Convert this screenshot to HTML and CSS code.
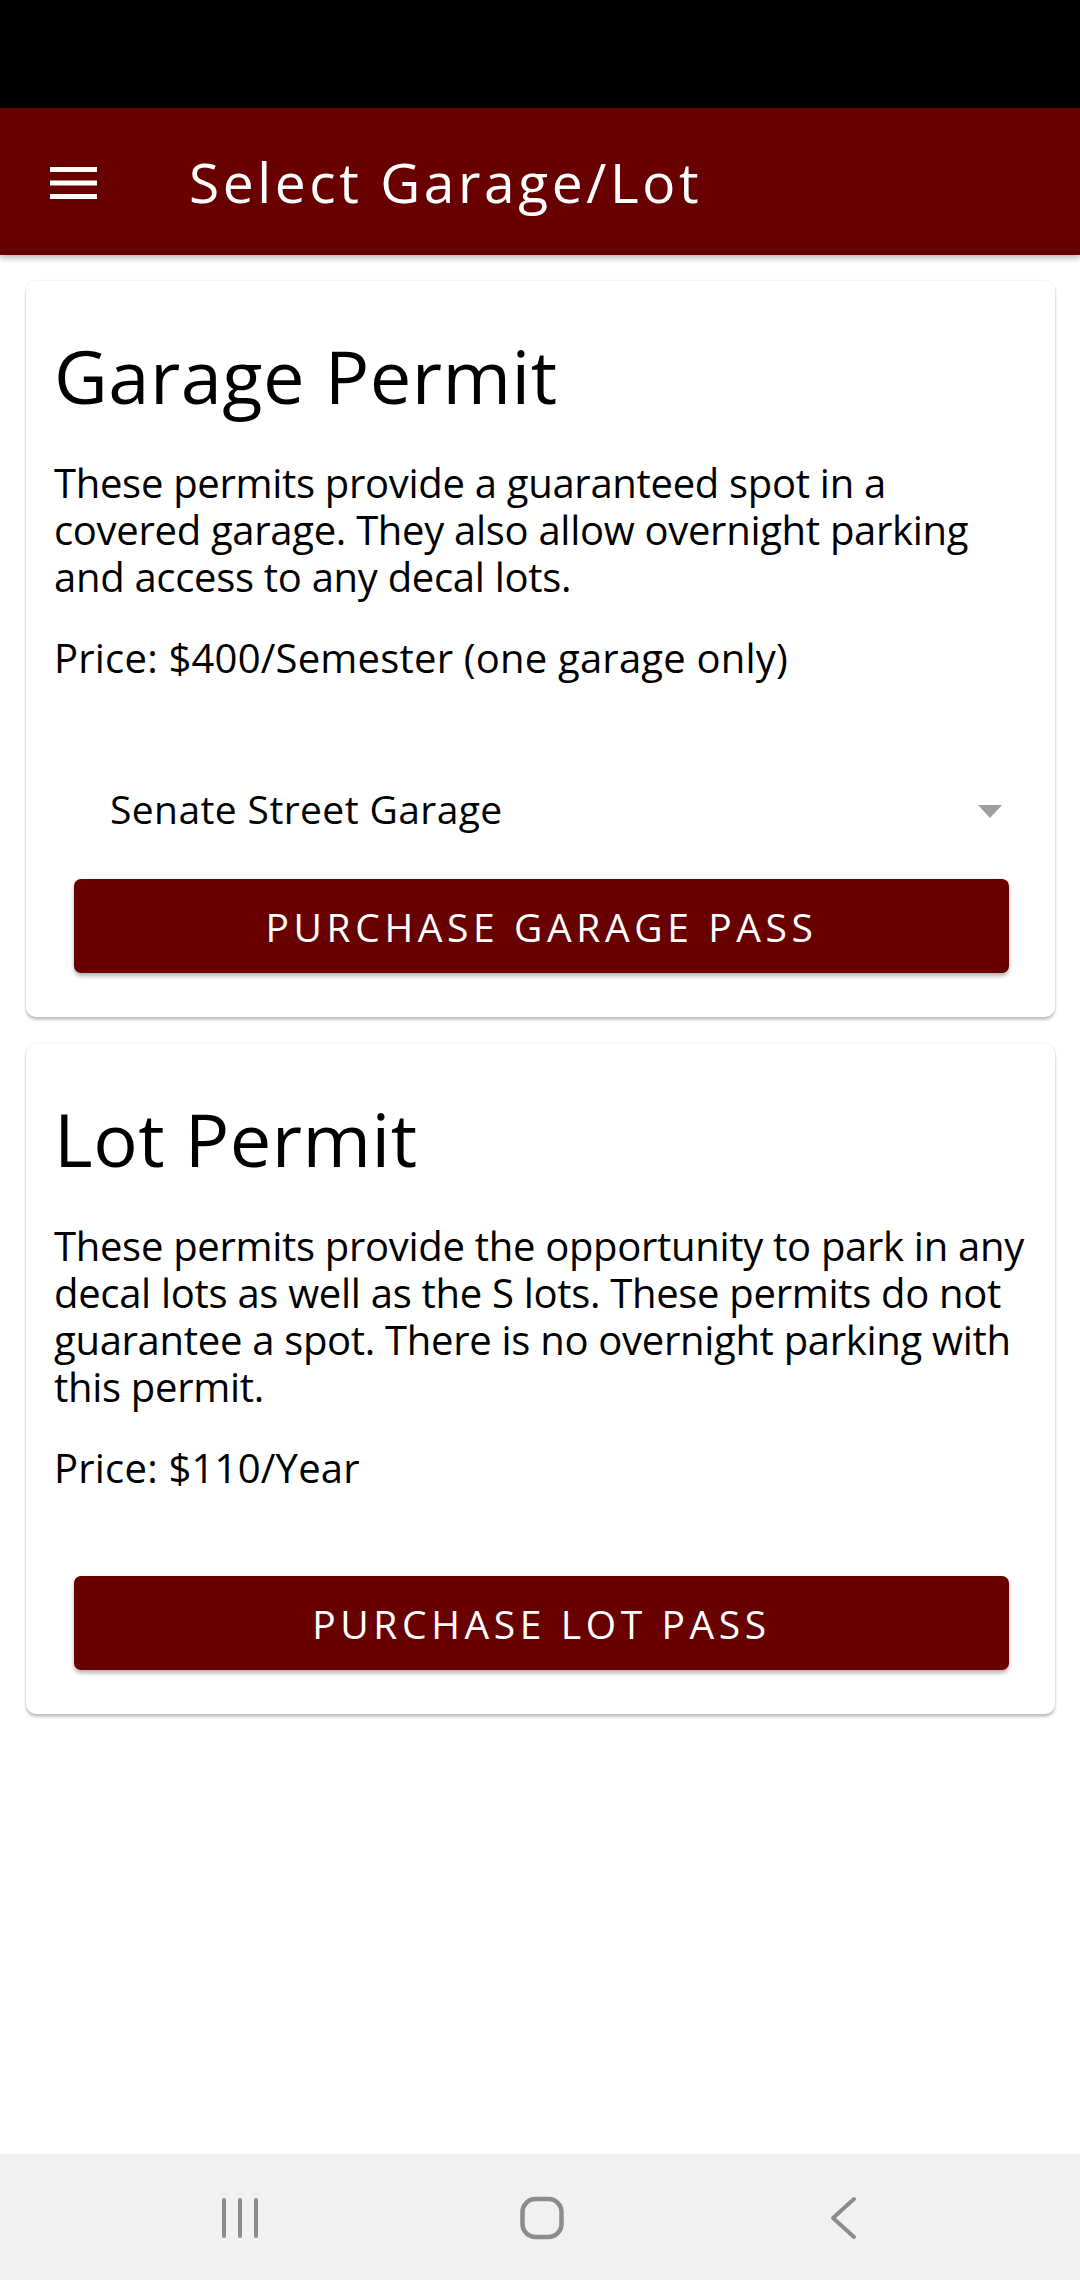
FILE: index.html
```html
<!DOCTYPE html>
<html>
<head>
<meta charset="utf-8">
<link rel="stylesheet" href="styles.css">
</head>
<body>
<div class="screen">
  <div class="statusbar"></div>
  <header class="appbar">
    <svg class="menu-icon" width="47" height="32" viewBox="0 0 47 32">
      <rect x="0" y="0" width="47" height="5" fill="#fff"/>
      <rect x="0" y="13.5" width="47" height="5" fill="#fff"/>
      <rect x="0" y="27" width="47" height="5" fill="#fff"/>
    </svg>
    <h1 class="appbar-title">Select Garage/Lot</h1>
  </header>
  <main class="content">
    <section class="card">
      <h2 class="card-title">Garage Permit</h2>
      <p class="card-text">These permits provide a guaranteed spot in a covered garage. They also allow overnight parking and access to any decal lots.</p>
      <p class="card-text price">Price: $400/Semester (one garage only)</p>
      <div class="select">
        <span class="select-value">Senate Street Garage</span>
        <svg class="select-arrow" width="24" height="13" viewBox="0 0 24 13"><polygon points="0,0 24,0 12,13" fill="#9e9e9e"/></svg>
      </div>
      <button class="btn btn-garage">PURCHASE GARAGE PASS</button>
    </section>
    <section class="card">
      <h2 class="card-title">Lot Permit</h2>
      <p class="card-text">These permits provide the opportunity to park in any decal lots as well as the S lots. These permits do not guarantee a spot. There is no overnight parking with this permit.</p>
      <p class="card-text price">Price: $110/Year</p>
      <button class="btn btn-lot">PURCHASE LOT PASS</button>
    </section>
  </main>
  <nav class="navbar">
    <svg class="nav-icon" width="60" height="60" viewBox="0 0 60 60">
      <g stroke="#8c8c8c" stroke-width="4" stroke-linecap="round" fill="none">
        <line x1="14" y1="12" x2="14" y2="48"/>
        <line x1="30" y1="12" x2="30" y2="48"/>
        <line x1="46" y1="12" x2="46" y2="48"/>
      </g>
    </svg>
    <svg class="nav-icon" width="60" height="60" viewBox="0 0 60 60">
      <rect x="10.5" y="11" width="39" height="38" rx="13" ry="13" stroke="#8c8c8c" stroke-width="4.5" fill="none"/>
    </svg>
    <svg class="nav-icon" width="60" height="60" viewBox="0 0 60 60">
      <polyline points="42,11 21,30 42,49" stroke="#8c8c8c" stroke-width="4" stroke-linecap="round" stroke-linejoin="round" fill="none"/>
    </svg>
  </nav>
</div>
</body>
</html>
```
FILE: styles.css
```css
* { box-sizing: border-box; }
html, body { margin: 0; padding: 0; }
body {
  width: 1080px;
  height: 2280px;
  background: #ffffff;
  font-family: "Open Sans", "Liberation Sans", sans-serif;
  color: #000;
  overflow: hidden;
}
.screen {
  display: flex;
  flex-direction: column;
  height: 2280px;
}
.statusbar {
  height: 108px;
  background: #000;
  flex: none;
}
.appbar {
  height: 147px;
  flex: none;
  background: #690000;
  display: flex;
  align-items: center;
  padding-left: 50px;
  box-shadow: 0 3px 6px rgba(0,0,0,0.28);
  position: relative;
  z-index: 2;
}
.menu-icon { flex: none; margin-top: 2px; }
.appbar-title {
  margin: 0 0 0 92px;
  font-size: 55px;
  font-weight: 400;
  color: #fff;
  line-height: 60px;
  letter-spacing: 3.6px;
}
.content {
  flex: 1;
  padding: 26px 25px 0 26px;
  display: flex;
  flex-direction: column;
  gap: 27px;
}
.card {
  background: #fff;
  border-radius: 10px;
  box-shadow: 0 3px 3px rgba(0,0,0,0.22), 0 0 3px rgba(0,0,0,0.10);
  padding: 51px 16px 44px 28px;
  display: flex;
  flex-direction: column;
}
.card-title {
  margin: 0;
  font-size: 74px;
  font-weight: 400;
  line-height: 88px;
  letter-spacing: 0.5px;
}
.card-text {
  margin: 39px 0 0 0;
  font-size: 40px;
  line-height: 47px;
  letter-spacing: -0.3px;
}
.card-text.price { margin-top: 34px; letter-spacing: 0.2px; }
.select {
  margin-top: 104px;
  height: 47px;
  display: flex;
  align-items: center;
  justify-content: space-between;
  padding-left: 56px;
  padding-right: 37px;
}
.select-value {
  font-size: 39px;
  line-height: 47px;
  letter-spacing: 0.4px;
}
.select-arrow { margin-top: 6px; }
.btn {
  margin: 47px 30px 0 20px;
  height: 94px;
  border: none;
  border-radius: 7px;
  background: #690000;
  color: #fff;
  font-family: inherit;
  font-size: 39px;
  letter-spacing: 4.6px;
  box-shadow: 0 3px 4px rgba(0,0,0,0.3);
}
.btn-lot { margin-top: 85px; }
.navbar {
  height: 126px;
  flex: none;
  background: #f1f1f1;
  display: flex;
  align-items: center;
  padding-top: 2px;
}
.navbar .nav-icon:nth-child(1) { margin-left: 210px; }
.navbar .nav-icon:nth-child(2) { margin-left: 242px; }
.navbar .nav-icon:nth-child(3) { margin-left: 240px; }
```
